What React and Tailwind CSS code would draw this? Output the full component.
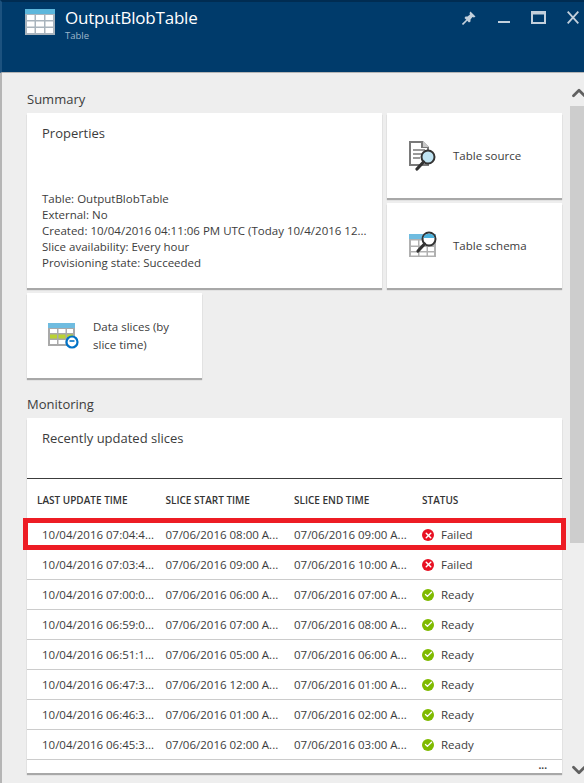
import { Check, ChevronDown, ChevronUp, X } from 'lucide-react';

const rows = [
  ['10/04/2016 07:04:4...', '07/06/2016 08:00 A...', '07/06/2016 09:00 A...', 'Failed'],
  ['10/04/2016 07:03:4...', '07/06/2016 09:00 A...', '07/06/2016 10:00 A...', 'Failed'],
  ['10/04/2016 07:00:0...', '07/06/2016 06:00 A...', '07/06/2016 07:00 A...', 'Ready'],
  ['10/04/2016 06:59:0...', '07/06/2016 07:00 A...', '07/06/2016 08:00 A...', 'Ready'],
  ['10/04/2016 06:51:1...', '07/06/2016 05:00 A...', '07/06/2016 06:00 A...', 'Ready'],
  ['10/04/2016 06:47:3...', '07/06/2016 12:00 A...', '07/06/2016 01:00 A...', 'Ready'],
  ['10/04/2016 06:46:3...', '07/06/2016 01:00 A...', '07/06/2016 02:00 A...', 'Ready'],
  ['10/04/2016 06:45:3...', '07/06/2016 02:00 A...', '07/06/2016 03:00 A...', 'Ready'],
];

const TableIcon = () => (
  <svg width="30" height="26" viewBox="0 0 30 26">
    <rect x="0" y="0" width="30" height="26" fill="#a9b4bd" />
    <rect x="0" y="0" width="30" height="5" fill="#5db7dc" />
    <rect x="2" y="6" width="7.5" height="5" fill="#fff" />
    <rect x="11" y="6" width="8" height="5" fill="#fff" />
    <rect x="20.5" y="6" width="7.5" height="5" fill="#fff" />
    <rect x="2" y="12.5" width="7.5" height="5" fill="#fff" />
    <rect x="11" y="12.5" width="8" height="5" fill="#fff" />
    <rect x="20.5" y="12.5" width="7.5" height="5" fill="#fff" />
    <rect x="2" y="19" width="7.5" height="5" fill="#fff" />
    <rect x="11" y="19" width="8" height="5" fill="#fff" />
    <rect x="20.5" y="19" width="7.5" height="5" fill="#fff" />
  </svg>
);

const SourceIcon = () => (
  <svg width="30" height="31" viewBox="0 0 30 31">
    <path d="M1 1h14l6 6v19H1z" fill="#7a7a7a" />
    <path d="M15 1l6 6h-6z" fill="#c9c9c9" />
    <rect x="3" y="3" width="10" height="21" fill="#fff" />
    <rect x="13" y="8" width="6" height="16" fill="#fff" />
    <path d="M5 10h12M5 14h9M5 18h7" stroke="#7a7a7a" strokeWidth="1.4" />
    <circle cx="20" cy="17" r="6.5" fill="#bfe3f2" stroke="#333" strokeWidth="2" />
    <path d="M15.5 22L9 29" stroke="#333" strokeWidth="3.2" strokeLinecap="round" />
  </svg>
);

const SchemaIcon = () => (
  <svg width="30" height="26" viewBox="0 0 30 26">
    <rect x="0" y="3" width="27" height="23" fill="#b0b0b0" />
    <rect x="0" y="3" width="27" height="5" fill="#6fbce0" />
    <path d="M2 9.5h7v5H2zM10.5 9.5h7v5h-7zM2 16h7v4H2zM10.5 16h7v4h-7zM19 16h6v4h-6zM2 21.5h7v3H2zM10.5 21.5h7v3h-7zM19 21.5h6v3h-6z" fill="#fff" />
    <circle cx="20" cy="8" r="6.5" fill="#fff" stroke="#333" strokeWidth="2" />
    <path d="M14.3 7a6 6 0 0 1 11.4 0z" fill="#4bb1dc" />
    <path d="M15.5 13L9 20" stroke="#333" strokeWidth="3.2" strokeLinecap="round" />
  </svg>
);

const SlicesIcon = () => (
  <svg width="31" height="26" viewBox="0 0 31 26">
    <rect x="0" y="0" width="27" height="23" fill="#a9a9a9" />
    <rect x="0" y="0" width="27" height="5" fill="#6fbce0" />
    <path d="M2 6h7v4H2zM10.5 6h7v4h-7zM19 6h6v4h-6zM2 17h7v4H2zM10.5 17h7v4h-7z" fill="#fff" />
    <path d="M2 11.5h7v4H2zM10.5 11.5h7v4h-7zM19 11.5h6v4h-6z" fill="#b9d233" />
    <circle cx="24" cy="19" r="5.5" fill="#fff" stroke="#0072c6" strokeWidth="2.2" />
    <path d="M21.5 18h5" stroke="#0072c6" strokeWidth="1.6" />
  </svg>
);

// window controls of the blade header
const PinIcon = () => (
  <svg width="14" height="14" viewBox="0 0 14 14" className="mt-[9px] mr-[22px]">
    <path d="M8.5 0.5L13.5 5.5L12 6.5L10.5 6L8.5 8.5L8.5 10.5L7 11.5L2.5 7L3.5 5.5L5.5 5.5L8 3.5L7.5 2z" fill="#c3d0dc" />
    <path d="M5 9L0.5 13.5" stroke="#c3d0dc" strokeWidth="1.6" />
  </svg>
);

const MinimizeIcon = () => (
  <svg width="12" height="14" viewBox="0 0 12 14" className="mt-[9px] mr-[21px]">
    <rect x="0" y="10" width="12" height="2" fill="#c3d0dc" />
  </svg>
);

const MaximizeIcon = () => (
  <svg width="15" height="13" viewBox="0 0 15 13" className="mt-[9px] mr-[21px]">
    <path d="M0 0h15v13H0zM2 3.5v7.5h11V3.5z" fill="#c3d0dc" fillRule="evenodd" />
  </svg>
);

const CloseIcon = () => (
  <svg width="12" height="13" viewBox="0 0 12 13" className="mt-[9px] mr-[5px]">
    <path d="M0.7 0.7L11.3 12.3M11.3 0.7L0.7 12.3" stroke="#c3d0dc" strokeWidth="1.8" />
  </svg>
);

const StatusIcon = ({ status }) =>
  status === 'Failed' ? (
    <span className="w-3 h-3 rounded-full bg-[#e81123] flex items-center justify-center shrink-0">
      <X size={9} strokeWidth={4} className="text-white" />
    </span>
  ) : (
    <span className="w-3 h-3 rounded-full bg-[#7fba00] flex items-center justify-center shrink-0">
      <Check size={9} strokeWidth={3.5} className="text-white" />
    </span>
  );

const Tile = ({ icon, className, children }) => (
  <div className={`bg-white shadow-[0_2px_1px_#a8a8a8] flex items-center ${className}`}>
    {icon}
    <span className="leading-[18px]">{children}</span>
  </div>
);

const App = () => {
  return (
    <div className="w-[584px] h-[783px] overflow-hidden flex flex-col bg-[#eeeeee] text-[#3c3c3c] text-[11.5px] font-['Open_Sans',sans-serif]">
      {/* Blade header */}
      <div className="h-[73px] shrink-0 bg-[#003b6b] border-t-2 border-t-[#002c52] border-l-2 border-l-[#1c527f] border-b border-b-[#b5b5b5] flex text-white">
        <div className="ml-[23px] mt-[7px]">
          <TableIcon />
        </div>
        <div className="ml-[10px] mt-[4px]">
          <div className="text-[17px] leading-[24px] tracking-[-0.2px]">OutputBlobTable</div>
          <div className="text-[9.5px] leading-[11px] text-[#9fb7cc]">Table</div>
        </div>
        <div className="ml-auto flex items-start">
          <PinIcon />
          <MinimizeIcon />
          <MaximizeIcon />
          <CloseIcon />
        </div>
      </div>

      <div className="flex-1 flex min-h-0">
        <div className="w-[2px] bg-[#b5b5b5] shrink-0" />

        <div className="w-[568px] shrink-0 pl-[25px] relative">
          <div className="text-[13px] leading-[18px] mt-[17px]">Summary</div>

          {/* Summary tiles */}
          <div className="grid grid-cols-[355px_175px] gap-x-[5px] gap-y-[5px] mt-[5px]">
            <div className="row-span-2 bg-white shadow-[0_2px_1px_#a8a8a8] px-[15px] pt-[11px]">
              <div className="text-[13px] leading-[18px]">Properties</div>
              <div className="mt-[49px] leading-[16px]">
                <div>Table: OutputBlobTable</div>
                <div>External: No</div>
                <div className="whitespace-nowrap">Created: 10/04/2016 04:11:06 PM UTC (Today 10/4/2016 12...</div>
                <div>Slice availability: Every hour</div>
                <div>Provisioning state: Succeeded</div>
              </div>
            </div>
            <Tile className="h-[85px] pl-[21px]" icon={<span className="mr-[15px] flex"><SourceIcon /></span>}>
              Table source
            </Tile>
            <Tile className="h-[85px] pl-[22px]" icon={<span className="mr-[14px] flex -mt-[4px]"><SchemaIcon /></span>}>
              Table schema
            </Tile>
          </div>
          <Tile className="w-[175px] h-[85px] mt-[5px] pl-[21px]" icon={<span className="mr-[14px] flex"><SlicesIcon /></span>}>
            Data slices (by
            <br />
            slice time)
          </Tile>

          <div className="text-[13px] leading-[18px] mt-[17px]">Monitoring</div>

          {/* Slices table */}
          <div className="w-[535px] h-[355px] mt-[5px] bg-white shadow-[0_2px_1px_#a8a8a8] flex flex-col">
            <div className="h-[61px] px-[15px] pt-[11px] border-b border-b-[#3c3c3c] shrink-0 text-[13px] leading-[18px]">
              Recently updated slices
            </div>
            <div className="h-[41px] pt-[1px] shrink-0 grid grid-cols-[128.5px_128.5px_128px_1fr] pl-[10px] items-center text-[10px] font-semibold text-[#333]">
              <div>LAST UPDATE TIME</div>
              <div>SLICE START TIME</div>
              <div>SLICE END TIME</div>
              <div>STATUS</div>
            </div>
            {rows.map((row, i) => (
              <div
                key={i}
                className={`h-[30px] shrink-0 grid grid-cols-[128.5px_128.5px_128px_1fr] pl-[10px] items-center whitespace-nowrap ${
                  i === 0 ? '' : 'border-b border-b-[#cccccc]'
                }`}
              >
                <div className="pl-[5px]">{row[0]}</div>
                <div>{row[1]}</div>
                <div>{row[2]}</div>
                <div className="flex items-center gap-[7px]">
                  <StatusIcon status={row[3]} />
                  {row[3]}
                </div>
              </div>
            ))}
            <div className="flex-1 flex justify-end pr-[15px] pt-[1px] text-[10px] leading-[8px] font-bold">...</div>
          </div>

          {/* Red callout around the first row */}
          <div className="absolute left-[21px] top-[445px] w-[543px] h-[32px] border-[5px] border-[#ed1c24]" />
        </div>

        {/* Scrollbar */}
        <div className="w-[14px] shrink-0 flex flex-col text-[#606060]">
          <ChevronUp size={22} strokeWidth={3} className="mt-[9px] -ml-[2px] shrink-0" />
          <div className="w-full h-[437px] bg-[#cdcdcd] mt-[2px] shrink-0" />
          <ChevronDown size={22} strokeWidth={3} className="mt-[216px] -ml-[2px] shrink-0" />
        </div>
      </div>
    </div>
  );
};

export default App;
